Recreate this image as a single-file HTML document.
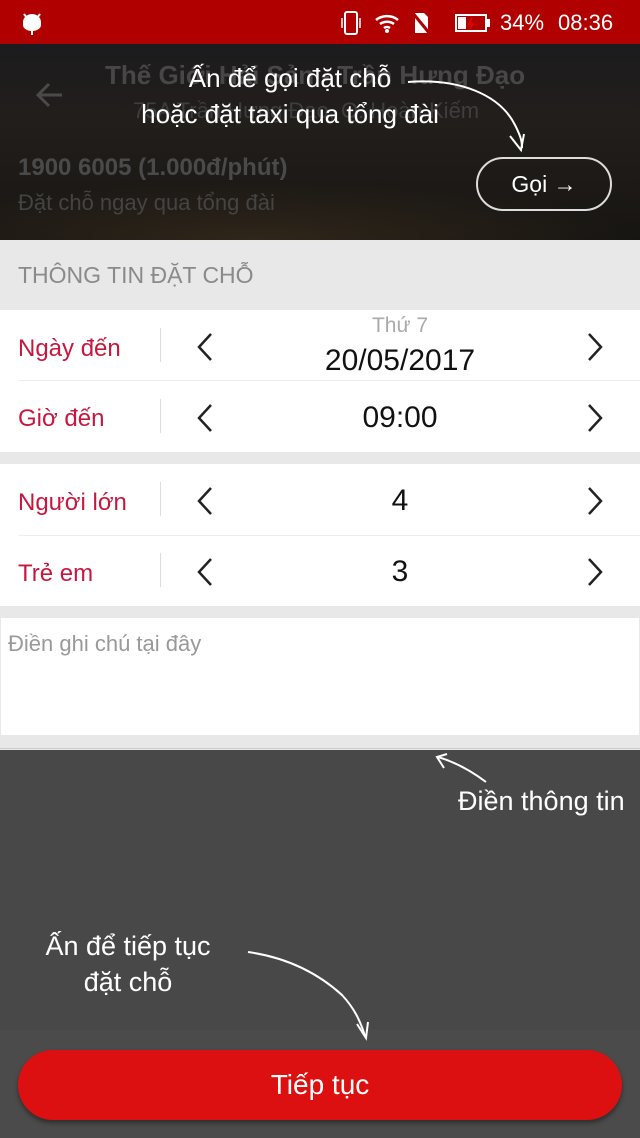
<!DOCTYPE html>
<html><head><meta charset="utf-8"><style>
*{margin:0;padding:0;box-sizing:border-box}
body{width:640px;height:1138px;position:relative;overflow:hidden;font-family:"Liberation Sans",sans-serif;background:#484848}
.a{position:absolute}
.lbl{position:absolute;left:18px;color:#c8173f;font-size:24px}
.val{position:absolute;left:200px;width:400px;text-align:center;color:#111;font-size:30px}
.vl{position:absolute;left:160px;width:1px;height:34px;background:#ddd}
.chev{position:absolute;width:20px;height:30px}
</style></head><body>
<div class="a" style="left:0;top:0;width:640px;height:44px;background:#b00000"></div>
<svg class="a" style="left:20px;top:10px" width="24" height="26" viewBox="0 0 24 26"><path d="M4 4 L7 8 M20 4 L17 8" stroke="#fff" stroke-width="2"/><path d="M3 12 a9 8 0 0 1 18 0 v3 a9 6 0 0 1 -18 0z" fill="#fff"/><rect x="11" y="18" width="2" height="7" fill="#fff"/></svg>
<svg class="a" style="left:340px;top:10px" width="24" height="26"><rect x="5" y="2" width="12" height="22" rx="2" fill="none" stroke="#fff" stroke-width="2"/><path d="M2 8v10M20 8v10" stroke="#fff" stroke-width="1.5"/></svg>
<svg class="a" style="left:374px;top:12px" width="26" height="22"><path d="M2 8a16 14 0 0 1 22 0M6 12a11 10 0 0 1 14 0M10 16a5 5 0 0 1 6 0" stroke="#fff" stroke-width="2.5" fill="none"/><circle cx="13" cy="19" r="2" fill="#fff"/></svg>
<svg class="a" style="left:410px;top:10px" width="22" height="26"><path d="M5 3h9l4 4v16H5z" fill="#fff"/><path d="M2 2 L20 24" stroke="#b00000" stroke-width="3"/></svg>
<svg class="a" style="left:455px;top:14px" width="36" height="18"><rect x="1" y="1" width="30" height="16" fill="none" stroke="#fff" stroke-width="2"/><rect x="3" y="3" width="8" height="12" fill="#fff"/><rect x="32" y="5" width="3" height="8" fill="#fff"/><path d="M17 4l-3 6h4l-3 5" stroke="#e00" stroke-width="1.5" fill="none"/></svg>
<div class="a" style="left:500px;top:10px;color:#fff;font-size:22px">34%</div>
<div class="a" style="left:558px;top:10px;color:#fff;font-size:22px">08:36</div>

<div class="a" style="left:0;top:44px;width:640px;height:196px;background:linear-gradient(180deg,#1c1b1d 0%,#221e1b 40%,#171512 100%)"></div>
<div class="a" style="left:0;top:180px;width:640px;height:60px;background:radial-gradient(ellipse at 40% 100%,#30261a 0%,transparent 70%)"></div>
<svg class="a" style="left:34px;top:80px" width="32" height="30"><path d="M28 15H4M15 4L4 15l11 11" stroke="#4a4a4a" stroke-width="3" fill="none"/></svg>
<div class="a" style="left:105px;top:60px;color:#474747;font-size:26px;font-weight:bold">Thế Giới Hải Sản - Trần Hưng Đạo</div>
<div class="a" style="left:133px;top:98px;color:#3e3e3e;font-size:22px">75A Trần Hưng Đạo, Q. Hoàn Kiếm</div>
<div class="a" style="left:18px;top:154px;color:#4a4a4a;font-size:24px;font-weight:bold">1900 6005 (1.000đ/phút)</div>
<div class="a" style="left:18px;top:190px;color:#444;font-size:22px">Đặt chỗ ngay qua tổng đài</div>
<div class="a" style="left:90px;top:60px;width:400px;text-align:center;color:#fff;font-size:26px;line-height:36px">Ấn để gọi đặt chỗ<br>hoặc đặt taxi qua tổng đài</div>
<div class="a" style="left:476px;top:157px;width:136px;height:54px;border:2px solid #ddd;border-radius:27px;color:#fff;font-size:23px;line-height:50px;text-align:center">Gọi →</div>

<div class="a" style="left:0;top:240px;width:640px;height:510px;background:#e8e8e8"></div>
<div class="a" style="left:18px;top:262px;color:#8a8a8a;font-size:23px">THÔNG TIN ĐẶT CHỖ</div>
<div class="a" style="left:0;top:310px;width:640px;height:142px;background:#fff"></div>
<div class="a" style="left:18px;top:380px;width:622px;height:1px;background:#eee"></div>
<div class="a" style="left:0;top:464px;width:640px;height:142px;background:#fff"></div>
<div class="a" style="left:18px;top:535px;width:622px;height:1px;background:#eee"></div>
<div class="a" style="left:1px;top:618px;width:638px;height:117px;background:#fff"></div>
<div class="a" style="left:8px;top:631px;color:#999;font-size:22px">Điền ghi chú tại đây</div>

<div class="lbl" style="top:335px">Ngày đến</div>
<div class="lbl" style="top:405px">Giờ đến</div>
<div class="lbl" style="top:489px">Người lớn</div>
<div class="lbl" style="top:560px">Trẻ em</div>
<div class="vl" style="top:328px"></div><div class="vl" style="top:399px"></div><div class="vl" style="top:482px"></div><div class="vl" style="top:553px"></div>
<div class="a" style="left:200px;top:314px;width:400px;text-align:center;color:#aaa;font-size:21px">Thứ 7</div>
<div class="val" style="top:344px">20/05/2017</div>
<div class="val" style="top:401px">09:00</div>
<div class="val" style="top:484px">4</div>
<div class="val" style="top:555px">3</div>
<svg class="chev" style="left:195px;top:332px"><path d="M16 2L4 15l12 13" stroke="#222" stroke-width="2.5" fill="none"/></svg>
<svg class="chev" style="left:585px;top:332px"><path d="M4 2l12 13L4 28" stroke="#222" stroke-width="2.5" fill="none"/></svg>
<svg class="chev" style="left:195px;top:403px"><path d="M16 2L4 15l12 13" stroke="#222" stroke-width="2.5" fill="none"/></svg>
<svg class="chev" style="left:585px;top:403px"><path d="M4 2l12 13L4 28" stroke="#222" stroke-width="2.5" fill="none"/></svg>
<svg class="chev" style="left:195px;top:486px"><path d="M16 2L4 15l12 13" stroke="#222" stroke-width="2.5" fill="none"/></svg>
<svg class="chev" style="left:585px;top:486px"><path d="M4 2l12 13L4 28" stroke="#222" stroke-width="2.5" fill="none"/></svg>
<svg class="chev" style="left:195px;top:557px"><path d="M16 2L4 15l12 13" stroke="#222" stroke-width="2.5" fill="none"/></svg>
<svg class="chev" style="left:585px;top:557px"><path d="M4 2l12 13L4 28" stroke="#222" stroke-width="2.5" fill="none"/></svg>

<div class="a" style="left:0;top:748px;width:640px;height:1px;background:#ccc"></div>
<div class="a" style="left:458px;top:786px;color:#fff;font-size:27px">Điền thông tin</div>
<div class="a" style="left:18px;top:928px;width:220px;text-align:center;color:#fff;font-size:27px;line-height:36px">Ấn để tiếp tục<br>đặt chỗ</div>
<div class="a" style="left:0;top:1030px;width:640px;height:108px;background:#4b4b4b"></div>
<div class="a" style="left:18px;top:1050px;width:604px;height:70px;background:#dc1010;border-radius:35px;box-shadow:0 3px 5px rgba(0,0,0,.4);color:#fff;font-size:28px;line-height:70px;text-align:center">Tiếp tục</div>
<svg class="a" style="left:0;top:0" width="640" height="1138">
<g stroke="#fff" stroke-width="2" fill="none">
<path d="M408 82 C460 78 500 95 515 125 C520 135 522 140 522 148"/>
<path d="M510 136 L521 150 L524 134"/>
<path d="M486 782 C470 770 455 762 438 757"/>
<path d="M447 754 L437 757 L444 768"/>
<path d="M248 952 C290 958 320 975 342 995 C354 1008 360 1020 365 1036"/>
<path d="M357 1024 L366 1038 L368 1022"/>
</g></svg>
</body></html>
